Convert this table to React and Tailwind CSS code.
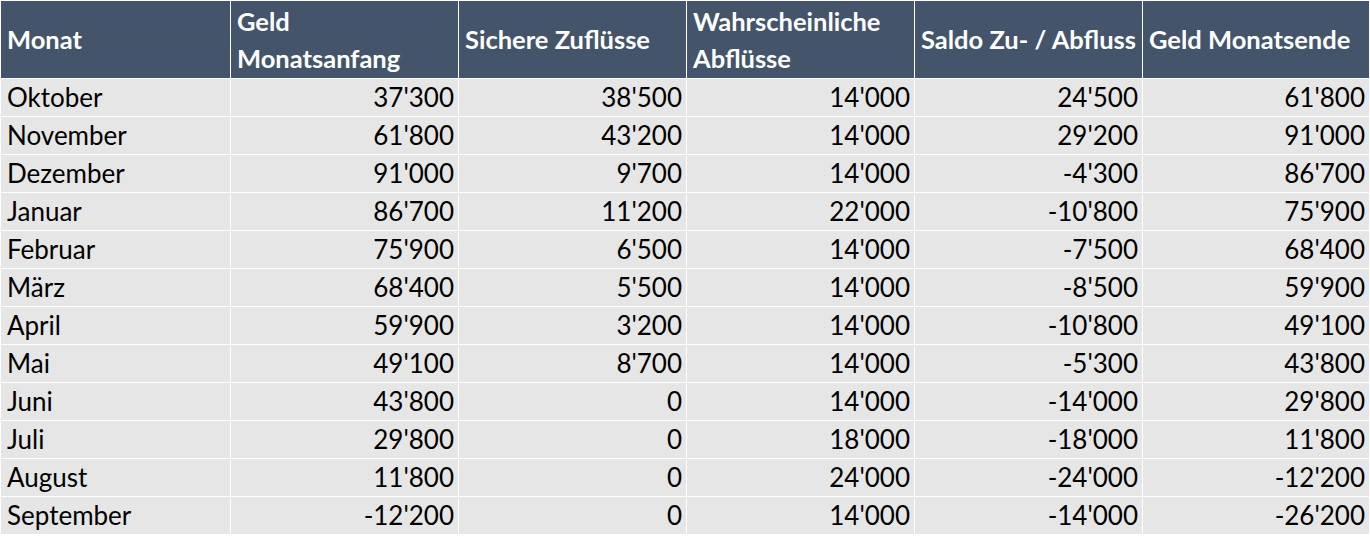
const headers = [
  ['Monat'],
  ['Geld', 'Monatsanfang'],
  ['Sichere Zuflüsse'],
  ['Wahrscheinliche', 'Abflüsse'],
  ['Saldo Zu- / Abfluss'],
  ['Geld Monatsende'],
];

const rows = [
  ['Oktober', "37'300", "38'500", "14'000", "24'500", "61'800"],
  ['November', "61'800", "43'200", "14'000", "29'200", "91'000"],
  ['Dezember', "91'000", "9'700", "14'000", "-4'300", "86'700"],
  ['Januar', "86'700", "11'200", "22'000", "-10'800", "75'900"],
  ['Februar', "75'900", "6'500", "14'000", "-7'500", "68'400"],
  ['März', "68'400", "5'500", "14'000", "-8'500", "59'900"],
  ['April', "59'900", "3'200", "14'000", "-10'800", "49'100"],
  ['Mai', "49'100", "8'700", "14'000", "-5'300", "43'800"],
  ['Juni', "43'800", '0', "14'000", "-14'000", "29'800"],
  ['Juli', "29'800", '0', "18'000", "-18'000", "11'800"],
  ['August', "11'800", '0', "24'000", "-24'000", "-12'200"],
  ['September', "-12'200", '0', "14'000", "-14'000", "-26'200"],
];

export default function App() {
  return (
    <div className="bg-white w-[1370px] h-[538px] overflow-hidden font-['Lato',sans-serif] text-[26px]">
      <div className="grid grid-cols-[229px_227px_227px_227px_227px_226px] gap-px p-px bg-white">
        {/* Header */}
        {headers.map((lines, i) => (
          <div
            key={i}
            className="bg-[#44546a] text-white font-bold text-[25.5px] h-[77px] flex flex-col justify-center pl-[6px] leading-[37px] whitespace-nowrap"
          >
            {lines.map((l) => (
              <span key={l}>{l}</span>
            ))}
          </div>
        ))}

        {/* Rows */}
        {rows.map((row) =>
          row.map((cell, j) => (
            <div
              key={row[0] + j}
              className={`bg-[#e7e6e6] text-black h-[37px] flex items-center whitespace-nowrap ${
                j === 0 ? 'justify-start pl-[6px]' : 'justify-end pr-[4px]'
              }`}
            >
              {cell}
            </div>
          ))
        )}
      </div>
    </div>
  );
}
